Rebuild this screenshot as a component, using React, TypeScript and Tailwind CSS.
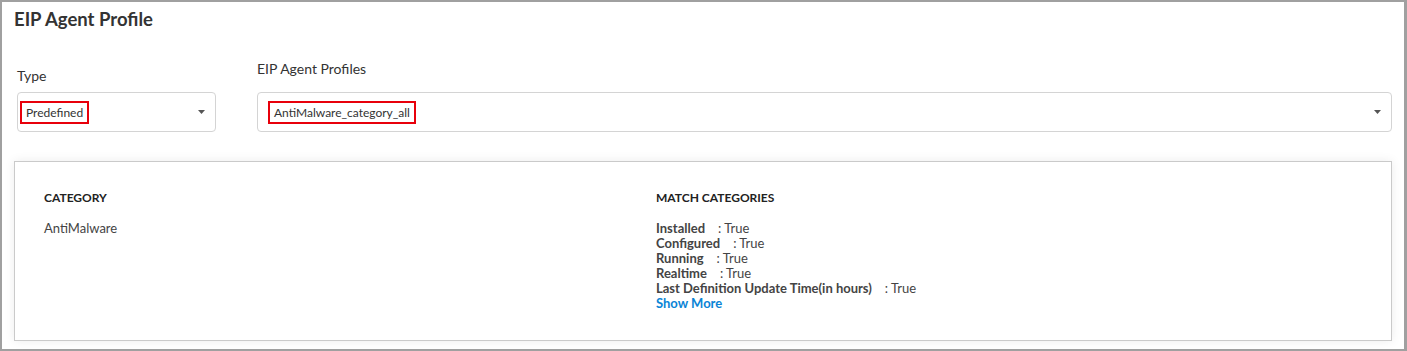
const matches = [
  { label: "Installed", value: "True" },
  { label: "Configured", value: "True" },
  { label: "Running", value: "True" },
  { label: "Realtime", value: "True" },
  { label: "Last Definition Update Time(in hours)", value: "True" },
];

function Caret() {
  return (
    <svg width="7" height="4" viewBox="0 0 7 4" className="shrink-0">
      <path d="M0 0h7L3.5 4z" fill="#555" />
    </svg>
  );
}

function SelectBox({ value, className }: { value: string; className?: string }) {
  return (
    <div
      className={`flex h-[40px] items-center justify-between rounded-[4px] border border-[#d4d4d4] bg-white pr-[10px] ${className ?? ""}`}
    >
      <span className="border-2 border-[#e8000b] px-[4px] py-[3px] text-[12px] leading-[13px] text-[#333]">
        {value}
      </span>
      <Caret />
    </div>
  );
}

export default function App() {
  return (
    <div className="h-[351px] w-[1407px] bg-white font-['Lato','Noto_Sans',sans-serif]">
      <div className="h-full w-full border-y-2 border-l-2 border-r-[3px] border-[#a0a0a0] pl-[12px] pr-[12px]">
        <h1 className="pt-[6px] text-[18.5px] leading-[22px] font-bold text-[#333]">
          EIP Agent Profile
        </h1>
        <div className="mt-[30px] flex gap-[41px] pl-[3px]">
          <div className="w-[199px]">
            <div className="pt-[7px] text-[14px] leading-[17px] text-[#333]">Type</div>
            <SelectBox value="Predefined" className="mt-[8px] pl-[2px]" />
          </div>
          <div className="flex-1">
            <div className="text-[14px] leading-[17px] text-[#333]">EIP Agent Profiles</div>
            <SelectBox value="AntiMalware_category_all" className="mt-[15px] pl-[10px]" />
          </div>
        </div>
        <div className="mt-[29px] flex h-[180px] border border-[#cacaca] bg-white shadow-[0_0_10px_rgba(0,0,0,0.08)]">
          <div className="w-[641px] pl-[29px] pt-[28px]">
            <div className="text-[12px] leading-[15px] font-bold text-[#222]">CATEGORY</div>
            <div className="mt-[16px] text-[13px] leading-[15px] text-[#444]">AntiMalware</div>
          </div>
          <div className="pt-[28px]">
            <div className="text-[12px] leading-[15px] font-bold text-[#222]">MATCH CATEGORIES</div>
            <div className="mt-[16px] text-[13px] leading-[15px] text-[#444]">
              {matches.map((m) => (
                <div key={m.label}>
                  <span className="font-bold">{m.label}</span>
                  <span className="ml-[13px]">: {m.value}</span>
                </div>
              ))}
              <a className="cursor-pointer font-bold text-[#0a84d6]">Show More</a>
            </div>
          </div>
        </div>
      </div>
    </div>
  );
}
